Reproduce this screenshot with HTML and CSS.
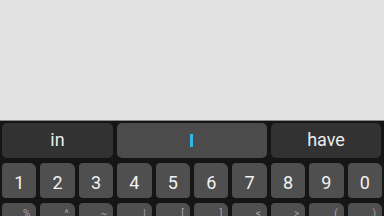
FILE: index.html
```html
<!DOCTYPE html>
<html>
<head>
<meta charset="utf-8">
<link rel="stylesheet" href="styles.css">
</head>
<body>
<div class="screen">
  <div class="content"></div>
  <div class="keyboard">
    <div class="suggestions">
      <div class="sugg side left">in</div>
      <div class="sugg mid"><span class="cursor"></span></div>
      <div class="sugg side right">have</div>
    </div>
    <div class="row digits">
      <div class="key">1</div>
      <div class="key">2</div>
      <div class="key">3</div>
      <div class="key">4</div>
      <div class="key">5</div>
      <div class="key">6</div>
      <div class="key">7</div>
      <div class="key">8</div>
      <div class="key">9</div>
      <div class="key">0</div>
    </div>
    <div class="row symbols">
      <div class="key"><span class="alt">%</span></div>
      <div class="key"><span class="alt">^</span></div>
      <div class="key"><span class="alt">~</span></div>
      <div class="key"><span class="alt">|</span></div>
      <div class="key"><span class="alt">[</span></div>
      <div class="key"><span class="alt">]</span></div>
      <div class="key"><span class="alt">&lt;</span></div>
      <div class="key"><span class="alt">&gt;</span></div>
      <div class="key"><span class="alt">(</span></div>
      <div class="key"><span class="alt">)</span></div>
    </div>
  </div>
</div>
</body>
</html>
```
FILE: styles.css
```css
html, body {
  margin: 0;
  padding: 0;
  background: #151515;
}
.screen {
  width: 384px;
  height: 216px;
  overflow: hidden;
  font-family: Roboto, "Noto Sans", sans-serif;
}
.content {
  height: 120px;
  background: #e1e1e1;
  border-bottom: 1px solid #8a8a8a;
}
.keyboard {
  background: #151515;
  height: 95px;
}
.suggestions {
  display: flex;
  gap: 4px;
  padding: 2px 3px 0 2px;
  height: 35px;
}
.sugg {
  border-radius: 5px;
  display: flex;
  align-items: center;
  justify-content: center;
  color: #ececec;
  font-size: 18px;
  padding-bottom: 2px;
  box-sizing: border-box;
}
.side {
  background: #323232;
}
.left {
  width: 111px;
}
.right {
  flex: 1;
}
.mid {
  width: 150px;
  background: #4b4b4b;
}
.cursor {
  display: block;
  width: 3px;
  height: 13px;
  margin-top: 2px;
  margin-right: 1px;
  background: #33b5e5;
}
.row {
  display: grid;
  grid-template-columns: repeat(10, 1fr);
  gap: 4px;
  padding: 0 2px;
}
.digits {
  margin-top: 5px;
}
.symbols {
  margin-top: 5px;
}
.key {
  height: 35px;
  background: #4f4f4f;
  border-radius: 4px 6px 4px 4px;
  color: #f2f2f2;
  font-size: 18px;
  display: flex;
  align-items: center;
  justify-content: center;
  padding-top: 3px;
  box-sizing: border-box;
}
.symbols .key {
  align-items: flex-start;
  justify-content: flex-end;
  padding: 5px 6px 0 0;
}
.alt {
  font-size: 10px;
  color: #a8a8a8;
}
```
